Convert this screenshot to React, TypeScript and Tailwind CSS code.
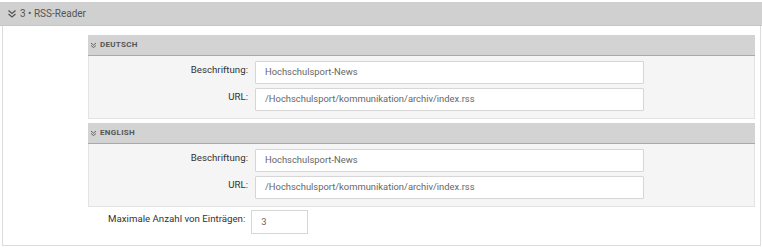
import React from "react";

const Chev = ({ className = "" }: { className?: string }) => (
  <svg viewBox="0 0 10 10" className={className} fill="none" stroke="currentColor" strokeWidth="1.3">
    <path d="M1.5 1.5 L5 4.5 L8.5 1.5" />
    <path d="M1.5 5 L5 8 L8.5 5" />
  </svg>
);

const Field = ({ label, value }: { label: string; value: string }) => (
  <div className="flex items-start">
    <div className="w-[160px] shrink-0 text-right pr-[1px] pt-[2px] text-[9.7px] text-[#333]">{label}</div>
    <div className="ml-[6px] w-[389px] h-[23px] bg-white border border-[#d6d6d6] rounded-[1px] flex items-center pl-[9px] text-[9.4px] text-[#666]">
      {value}
    </div>
  </div>
);

const Panel = ({ title }: { title: string }) => (
  <div>
    <div className="h-[21px] bg-[#d3d3d3] border-b border-[#a9a9a9] flex items-center pl-[2px] text-[#555]">
      <Chev className="w-[7px] h-[7px]" />
      <span className="ml-[3px] text-[8px] font-bold tracking-[0.3px]">{title}</span>
    </div>
    <div className="bg-[#f5f5f5] border border-t-0 border-[#e3e3e3] pt-[5px] pb-[7px] flex flex-col gap-[4px]">
      <Field label="Beschriftung:" value="Hochschulsport-News" />
      <Field label="URL:" value="/Hochschulsport/kommunikation/archiv/index.rss" />
    </div>
  </div>
);

export default function App() {
  return (
    <div className="w-[762px] h-[249px] bg-white pt-[2px]" style={{ fontFamily: "Roboto, 'Liberation Sans', sans-serif" }}>
      <div className="h-[24px] bg-[#d0d0d0] border-b border-[#c6c6c6] flex items-center pl-[7px] text-[#555]">
        <Chev className="w-[10px] h-[10px]" />
        <span className="ml-[3px] text-[10px]">3 • RSS-Reader</span>
      </div>
      <div className="ml-[2px] mr-[1px] h-[220px] border-l border-r border-b border-[#dcdcdc] pt-[9px]">
        <div className="ml-[85px] mr-[5px] flex flex-col gap-[4px]">
          <Panel title="DEUTSCH" />
          <Panel title="ENGLISH" />
        </div>
        <div className="flex items-start mt-[3px] ml-[105px]">
          <div className="text-[9.7px] text-[#333] pt-[2px]">Maximale Anzahl von Einträgen:</div>
          <div className="ml-[6px] w-[57px] h-[24px] bg-white border border-[#d6d6d6] flex items-center pl-[9px] text-[9.4px] text-[#666]">3</div>
        </div>
      </div>
    </div>
  );
}
